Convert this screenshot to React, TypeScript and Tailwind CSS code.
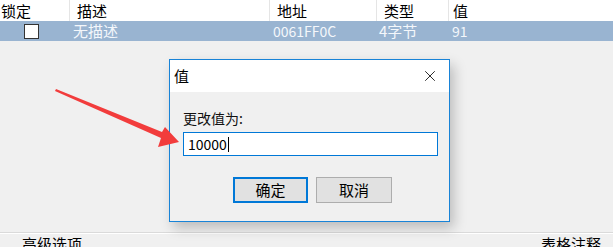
import { X } from 'lucide-react';

const font = { fontFamily: '"Noto Sans CJK SC", "Noto Sans", sans-serif' };

function Header() {
  return (
    <div className="flex h-[21px] bg-white text-[15px] leading-[21px] text-black">
      <div className="w-[70px] border-r border-[#e5e5e5] pl-[1px]">锁定</div>
      <div className="w-[200px] border-r border-[#e5e5e5] pl-[7px]">描述</div>
      <div className="w-[107px] border-r border-[#e5e5e5] pl-[7px]">地址</div>
      <div className="w-[72px] border-r border-[#e5e5e5] pl-[7px]">类型</div>
      <div className="flex-1 pl-[4px]">值</div>
    </div>
  );
}

function SelectedRow() {
  return (
    <div className="flex h-[20px] items-center bg-[#99b4d1] text-[15px] leading-[20px] text-[#f4f7fb]">
      <div className="flex w-[70px] justify-start pl-[24px]">
        <div className="h-[15px] w-[15px] border border-[#333] bg-white" />
      </div>
      <div className="w-[200px] pl-[3px]">无描述</div>
      <div className="w-[107px] pl-[3px] text-[14px]">0061FF0C</div>
      <div className="w-[72px] pl-[2px]">4字节</div>
      <div className="flex-1 pl-[3px] text-[14px]">91</div>
    </div>
  );
}

function Dialog() {
  return (
    <div className="absolute left-[169px] top-[59px] flex h-[163px] w-[281px] flex-col border border-[#1883d7] bg-[#f0f0f0] shadow-[4px_6px_12px_rgba(0,0,0,0.22)]">
      <div className="flex h-[32px] items-center justify-between bg-white pl-[4px] pr-[10px] text-[15px] text-black">
        <span>值</span>
        <X size={18} strokeWidth={1.1} className="text-black" />
      </div>
      <div className="flex flex-col px-[13px] pt-[17px]">
        <div className="text-[14px] leading-[18px] text-[#111]">更改值为:</div>
        <div className="mt-[5px] flex h-[24px] w-[255px] items-center border border-[#0078d7] bg-white pl-[4px] text-[14px] text-black">
          <span>10000</span>
          <span className="ml-[1px] h-[15px] w-[1px] bg-black" />
        </div>
        <div className="mt-[21px] flex gap-[8px] pl-[50px]">
          <button className="flex h-[26px] w-[75px] items-center justify-center border-2 border-[#0078d7] bg-[#e1e1e1] text-[15px] text-black">
            确定
          </button>
          <button className="flex h-[26px] w-[76px] items-center justify-center border border-[#adadad] bg-[#e1e1e1] text-[15px] text-black">
            取消
          </button>
        </div>
      </div>
    </div>
  );
}

function Arrow() {
  return (
    <svg className="absolute left-0 top-0" width="613" height="247" viewBox="0 0 613 247">
      <path d="M56 89 L162 132 L165 127 L179 142 L158 147 L161 138 L55 91 Z" fill="#f23c3c" />
    </svg>
  );
}

export default function App() {
  return (
    <div className="relative flex h-[247px] w-[613px] flex-col overflow-hidden bg-[#f0f0f0]" style={font}>
      <Header />
      <SelectedRow />
      <div className="flex-1" />
      <div className="h-[15px] border-t border-[#dadada] bg-[#f0f0f0]">
        <div className="flex justify-between border-t border-white px-[22px] pr-[12px] text-[15px] leading-[20px] text-black">
          <span>高级选项</span>
          <span>表格注释</span>
        </div>
      </div>
      <Dialog />
      <Arrow />
    </div>
  );
}
